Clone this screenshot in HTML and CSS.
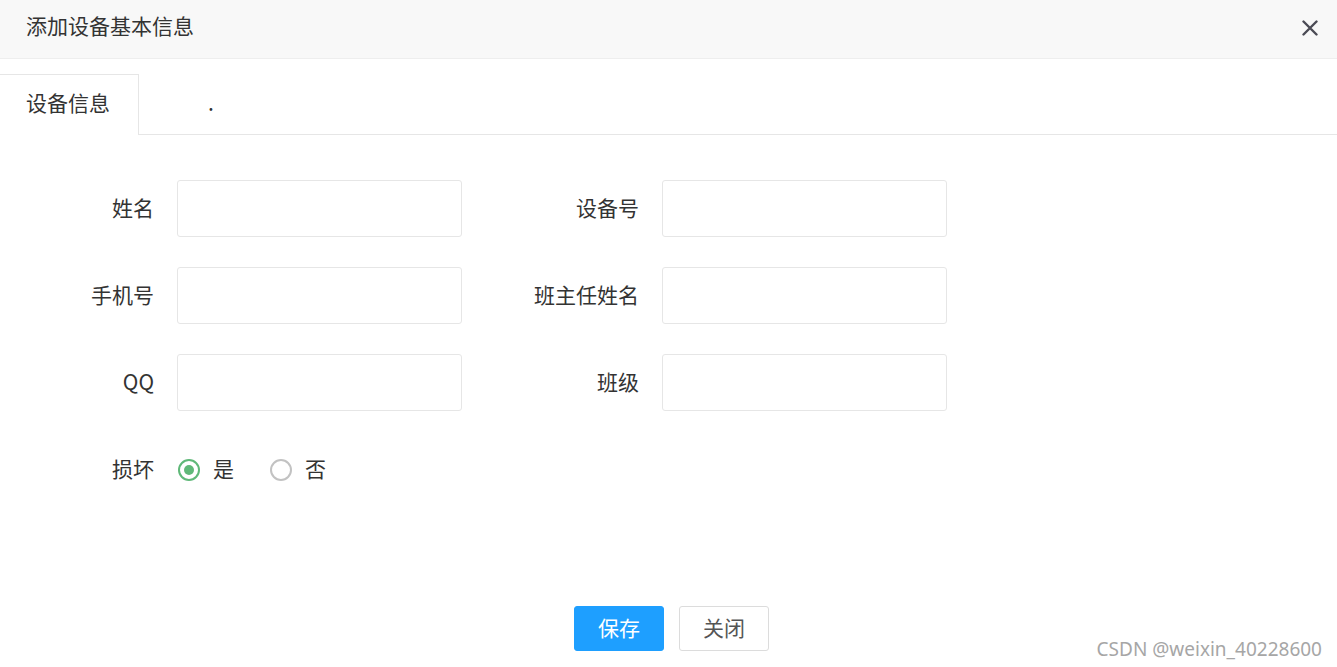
FILE: index.html
```html
<!DOCTYPE html>
<html lang="zh-CN">
<head>
<meta charset="utf-8">
<title>添加设备基本信息</title>
<link rel="stylesheet" href="styles.css">
</head>
<body>
<div class="dialog">
  <div class="dlg-head">
    <span class="dlg-title">添加设备基本信息</span>
    <span class="dlg-close" aria-label="关闭">
      <svg width="16" height="16" viewBox="0 0 16 16"><path d="M1.5 1.5L14.5 14.5M14.5 1.5L1.5 14.5" stroke="#4b4b55" stroke-width="2.4" stroke-linecap="round" fill="none"/></svg>
    </span>
  </div>
  <div class="tabs">
    <ul class="tab-title">
      <li class="tab this">设备信息</li>
      <li class="tab tab-dot">.</li>
    </ul>
  </div>
  <form class="form">
    <div class="grid">
      <label class="lbl">姓名</label>
      <input class="inp" type="text">
      <label class="lbl">设备号</label>
      <input class="inp" type="text">

      <label class="lbl">手机号</label>
      <input class="inp" type="text">
      <label class="lbl">班主任姓名</label>
      <input class="inp" type="text">

      <label class="lbl">QQ</label>
      <input class="inp" type="text">
      <label class="lbl">班级</label>
      <input class="inp" type="text">

      <label class="lbl">损坏</label>
      <div class="radios">
        <span class="radio on"><i class="dot"></i><span class="rtxt">是</span></span>
        <span class="radio"><i class="dot"></i><span class="rtxt">否</span></span>
      </div>
    </div>
    <div class="btns">
      <button type="button" class="btn primary">保存</button>
      <button type="button" class="btn plain">关闭</button>
    </div>
  </form>
</div>
<div class="watermark">CSDN @weixin_40228600</div>
</body>
</html>
```
FILE: styles.css
```css
* { box-sizing: border-box; }
html, body {
  margin: 0;
  padding: 0;
  background: #fff;
}
body {
  font-family: "Noto Sans CJK SC", "Noto Sans", sans-serif;
  color: #333;
  width: 1337px;
  height: 667px;
  overflow: hidden;
  position: relative;
}
.dlg-head {
  height: 59px;
  background: #f8f8f8;
  border-bottom: 1px solid #eee;
  display: flex;
  align-items: center;
  justify-content: space-between;
  padding: 0 19px 4px 26px;
}
.dlg-title {
  font-size: 21px;
  color: #333;
  line-height: 1;
  margin-bottom: 3px;
}
.dlg-close {
  display: flex;
  width: 16px;
  height: 16px;
  margin-top: 2px;
}
.tabs {
  margin-top: 15px;
  border-bottom: 1px solid #e6e6e6;
}
.tab-title {
  list-style: none;
  margin: 0;
  padding: 0;
  display: flex;
  height: 60px;
}
.tab {
  font-size: 21px;
  line-height: 55px;
  height: 61px;
  color: #333;
}
.tab.this {
  width: 139px;
  padding-left: 26px;
  background: #fff;
  border-top: 1px solid #e6e6e6;
  border-right: 1px solid #e6e6e6;
  position: relative;
  z-index: 1;
}
.tab-dot {
  padding-left: 69px;
  line-height: 57px;
}
.form {
  padding-top: 45px;
}
.grid {
  display: grid;
  grid-template-columns: 177px 285px 200px 285px;
  grid-auto-rows: 57px;
  row-gap: 30px;
}
.lbl {
  font-size: 21px;
  color: #333;
  text-align: right;
  padding-right: 23px;
  align-self: center;
  line-height: 1;
  margin-bottom: 3px;
}
.inp {
  width: 285px;
  height: 57px;
  border: 1px solid #e6e6e6;
  border-radius: 3px;
  background: #fff;
  margin: 0;
  outline: none;
}
.radios {
  grid-column: 2 / 5;
  display: flex;
  align-items: center;
}
.radio {
  display: flex;
  align-items: center;
  margin-right: 36px;
  margin-left: 1px;
}
.radio + .radio { margin-left: 0; }
.dot {
  width: 22px;
  height: 22px;
  border-radius: 50%;
  border: 2px solid #c2c2c2;
  display: inline-block;
  position: relative;
}
.radio.on .dot { border-color: #5fb878; }
.radio.on .dot::after {
  content: "";
  position: absolute;
  left: 4px;
  top: 4px;
  width: 10px;
  height: 10px;
  border-radius: 50%;
  background: #5fb878;
}
.rtxt {
  font-size: 21px;
  color: #333;
  margin-left: 13px;
  line-height: 1;
  margin-bottom: 2px;
}
.btns {
  display: flex;
  justify-content: center;
  gap: 15px;
  margin-top: 108px;
  padding-left: 6px;
}
.btn {
  width: 90px;
  height: 45px;
  font-family: "Noto Sans CJK SC", "Noto Sans", sans-serif;
  font-size: 21px;
  border-radius: 3px;
  padding: 0 0 2px;
  line-height: 1;
  cursor: pointer;
}
.btn.primary {
  background: #1e9fff;
  border: 1px solid #1e9fff;
  color: #fff;
}
.btn.plain {
  background: #fff;
  border: 1px solid #dcdcdc;
  color: #555;
}
.watermark {
  position: absolute;
  right: 15px;
  bottom: 8px;
  font-family: "Noto Sans", "Open Sans", sans-serif;
  font-size: 19px;
  color: #a6a6a6;
  line-height: 1;
}
```
